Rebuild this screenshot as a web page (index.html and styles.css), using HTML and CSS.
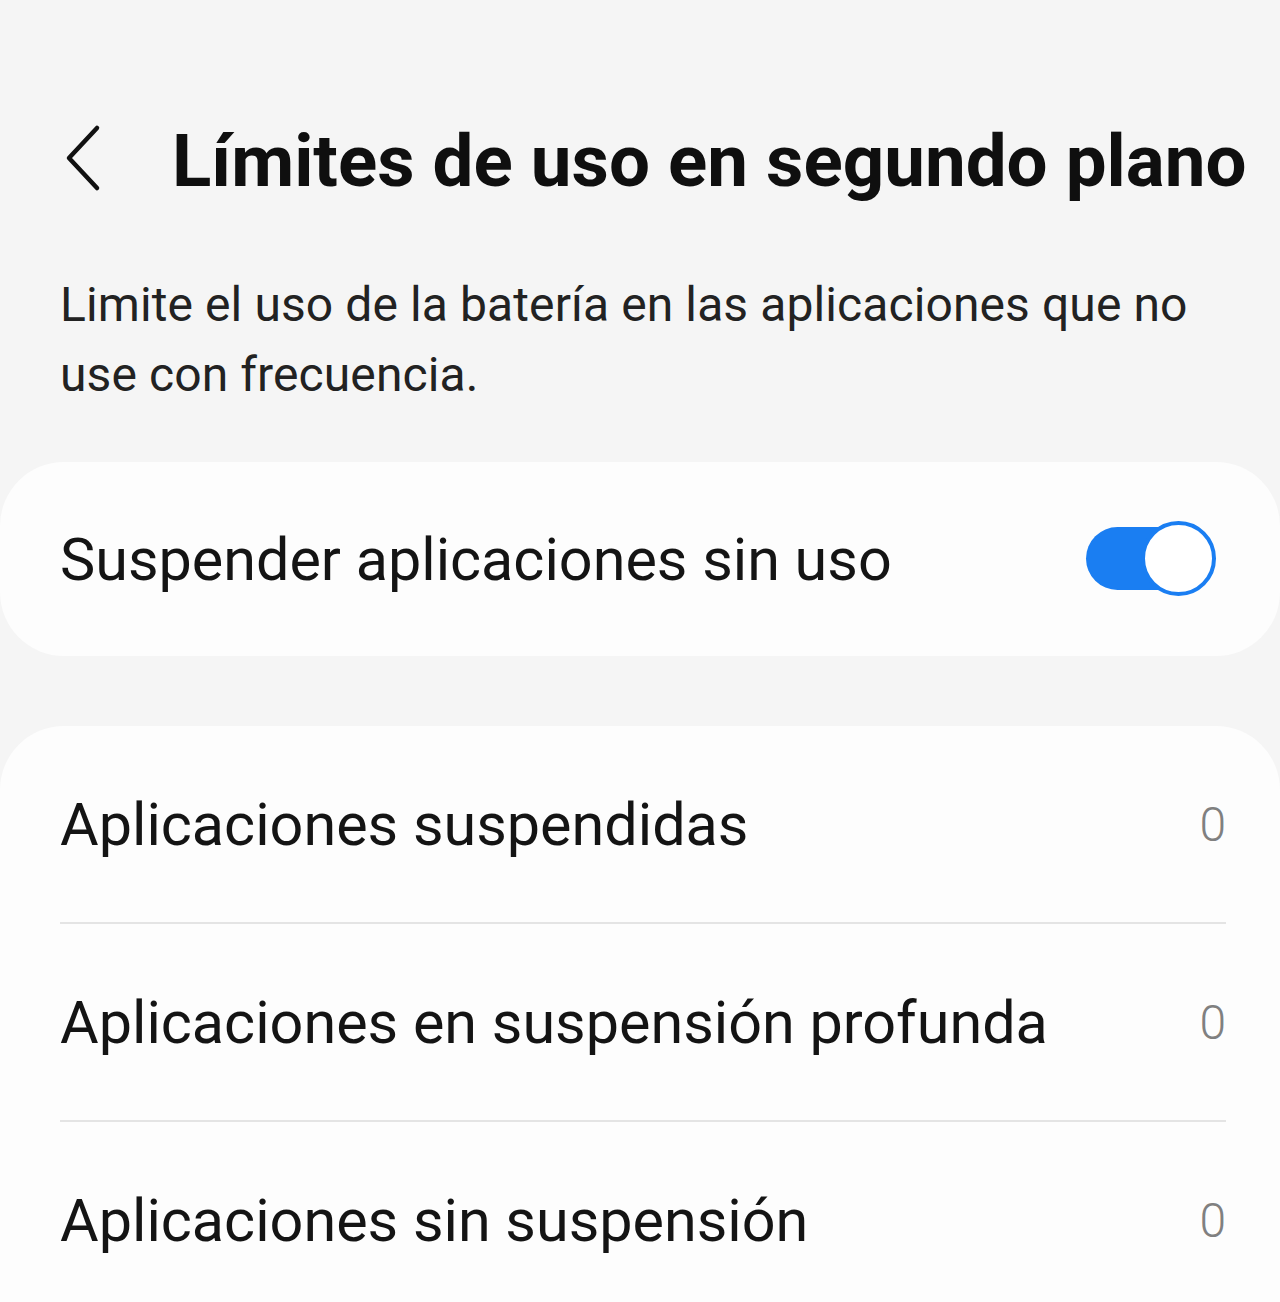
FILE: index.html
```html
<!DOCTYPE html>
<html lang="es">
<head>
<meta charset="utf-8">
<title>Límites de uso en segundo plano</title>
<link rel="stylesheet" href="styles.css">
</head>
<body>
<div class="screen">
  <header class="header">
    <button class="back" aria-label="Atrás">
      <svg width="40" height="70" viewBox="0 0 40 70">
        <path d="M33 4 L5 34 L33 64" fill="none" stroke="#111" stroke-width="4.5" stroke-linecap="round" stroke-linejoin="round"/>
      </svg>
    </button>
    <h1 class="title">Límites de uso en segundo plano</h1>
  </header>

  <p class="desc">Limite el uso de la batería en las aplicaciones que no use con frecuencia.</p>

  <section class="card card-switch">
    <span class="row-label">Suspender aplicaciones sin uso</span>
    <span class="switch" role="switch" aria-checked="true">
      <span class="track"></span>
      <span class="thumb"></span>
    </span>
  </section>

  <section class="card card-list">
    <div class="list-row">
      <span class="row-label">Aplicaciones suspendidas</span>
      <span class="count">0</span>
    </div>
    <div class="divider"></div>
    <div class="list-row">
      <span class="row-label">Aplicaciones en suspensión profunda</span>
      <span class="count">0</span>
    </div>
    <div class="divider"></div>
    <div class="list-row">
      <span class="row-label">Aplicaciones sin suspensión</span>
      <span class="count">0</span>
    </div>
  </section>
</div>
</body>
</html>
```

FILE: styles.css
```css
html, body {
  margin: 0;
  padding: 0;
}
body {
  background: #f5f5f5;
  font-family: Roboto, "Noto Sans", "Liberation Sans", sans-serif;
  color: #141414;
  overflow: hidden;
}
.screen {
  width: 1280px;
  height: 1302px;
  overflow: hidden;
}
.header {
  display: flex;
  align-items: center;
  padding-top: 114px;
  height: 96px;
}
.back {
  border: 0;
  background: none;
  padding: 0;
  margin: 0 0 0 64px;
  width: 40px;
  height: 70px;
  display: flex;
  align-items: center;
  justify-content: center;
  position: relative;
  top: -3px;
}
.back svg { display: block; }
.title {
  margin: 0 0 0 68px;
  font-size: 72.7px;
  line-height: 96px;
  font-weight: 700;
  color: #0f0f0f;
  white-space: nowrap;
  letter-spacing: 0;
}
.desc {
  margin: 60px 60px 0 60px;
  font-size: 48px;
  line-height: 70px;
  letter-spacing: 0.1px;
  color: #222;
  max-width: 1150px;
}
.card {
  background: #fdfdfd;
}
.card-switch {
  margin-top: 52px;
  height: 194px;
  border-radius: 64px;
  display: flex;
  align-items: center;
  justify-content: space-between;
  padding: 0 64px 0 60px;
}
.row-label {
  font-size: 59.3px;
  color: #141414;
  white-space: nowrap;
}
.switch {
  position: relative;
  width: 130px;
  height: 76px;
  display: block;
}
.track {
  position: absolute;
  left: 0;
  top: 6px;
  width: 112px;
  height: 63px;
  border-radius: 32px;
  background: #1a7ef2;
}
.thumb {
  position: absolute;
  right: 0;
  top: 0;
  width: 67px;
  height: 67px;
  border-radius: 50%;
  background: #fff;
  border: 4px solid #1a7ef2;
}
.card-list {
  margin-top: 70px;
  border-radius: 64px 64px 0 0;
  padding: 0 54px 0 60px;
  height: 620px;
}
.list-row {
  height: 196px;
  display: flex;
  align-items: center;
  justify-content: space-between;
}
.count {
  font-size: 48px;
  color: #808080;
  font-weight: 300;
}
.divider {
  height: 2px;
  background: #e4e4e4;
}
```
